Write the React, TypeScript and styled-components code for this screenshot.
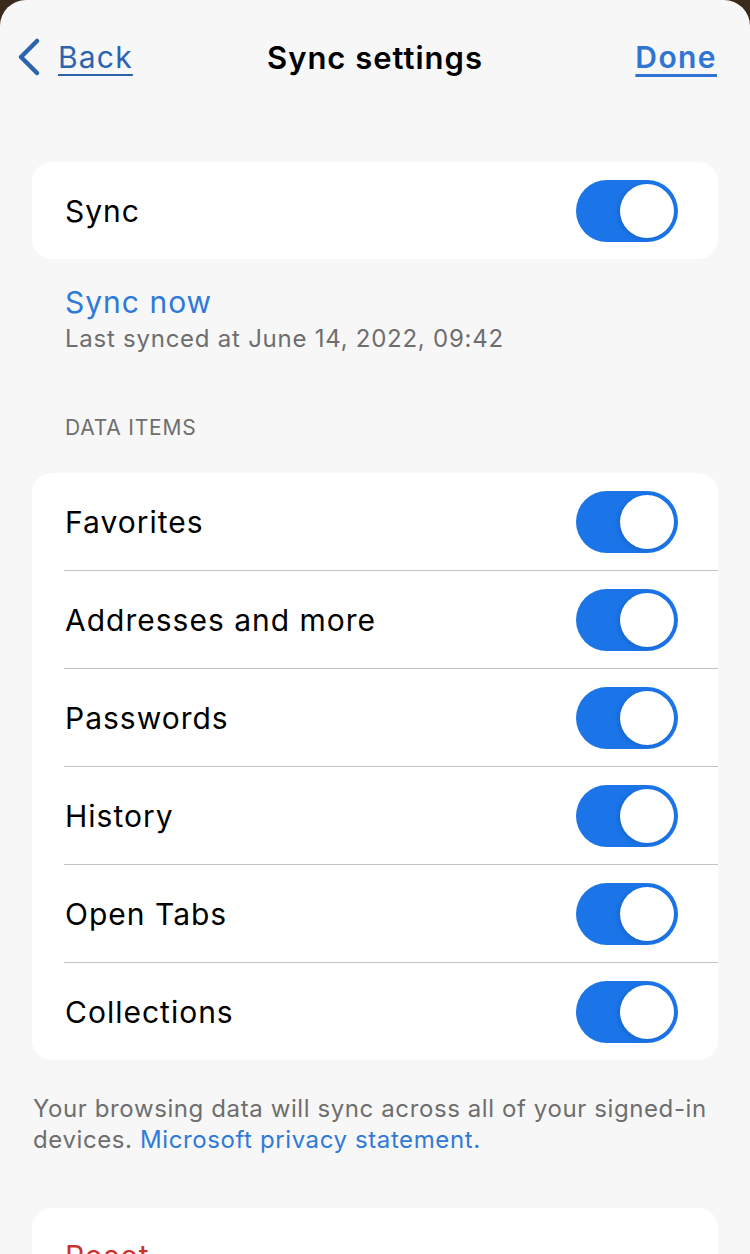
import React from 'react';
import styled, { createGlobalStyle } from 'styled-components';

const GlobalStyle = createGlobalStyle`
  html, body {
    margin: 0;
    padding: 0;
    background: #3a2a1c;
  }
  * {
    box-sizing: border-box;
  }
`;

const dataItems = ['Favorites', 'Addresses and more', 'Passwords', 'History', 'Open Tabs', 'Collections'];

const Toggle: React.FC<{ on?: boolean }> = ({ on = true }) => (
    <ToggleTrack $on={on}>
        <ToggleThumb />
    </ToggleTrack>
);

const App: React.FC = () => {
    return (
        <>
            <GlobalStyle />
            <Sheet>
                <Header>
                    <BackButton>
                        <svg width="30" height="40" viewBox="0 0 30 40">
                            <path d="M21 4 L5 20 L21 36" fill="none" stroke="#2c63ae" strokeWidth="4.5" strokeLinecap="round" strokeLinejoin="round" />
                        </svg>
                        <LinkText>Back</LinkText>
                    </BackButton>
                    <Title>Sync settings</Title>
                    <DoneButton>Done</DoneButton>
                </Header>

                <Content>
                    <Card>
                        <Row>
                            <RowLabel>Sync</RowLabel>
                            <Toggle />
                        </Row>
                    </Card>

                    <SyncNow>Sync now</SyncNow>
                    <LastSynced>Last synced at June 14, 2022, 09:42</LastSynced>

                    <SectionTitle>DATA ITEMS</SectionTitle>
                    <ItemsCard>
                        {dataItems.map((item, i) => (
                            <Row key={item} $divider={i < dataItems.length - 1}>
                                <RowLabel>{item}</RowLabel>
                                <Toggle />
                            </Row>
                        ))}
                    </ItemsCard>

                    <Footnote>
                        Your browsing data will sync across all of your <NoWrap>signed-in</NoWrap> devices.{' '}
                        <FootLink>Microsoft privacy statement.</FootLink>
                    </Footnote>

                    <ResetCard>
                        <ResetLabel>Reset</ResetLabel>
                    </ResetCard>
                </Content>
            </Sheet>
        </>
    );
};

export default App;

const Sheet = styled.div`
    width: 750px;
    height: 1254px;
    overflow: hidden;
    background: #f7f7f7;
    border-radius: 26px 26px 0 0;
    font-family: Inter, "Noto Sans", sans-serif;
    color: #000;
`;

const Header = styled.div`
    height: 114px;
    display: grid;
    grid-template-columns: 1fr auto 1fr;
    align-items: center;
    padding: 0 16px;
`;

const BackButton = styled.div`
    display: flex;
    align-items: center;
    gap: 12px;
    justify-self: start;
    cursor: pointer;
`;

const LinkText = styled.span`
    font-size: 30px;
    letter-spacing: 1.2px;
    color: #2c63ae;
    text-decoration: underline;
    text-decoration-thickness: 2px;
    text-underline-offset: 6px;
`;

const Title = styled.div`
    font-size: 31px;
    font-weight: 600;
    letter-spacing: 1px;
`;

const DoneButton = styled.div`
    justify-self: end;
    padding-right: 17px;
    font-size: 30px;
    font-weight: 600;
    letter-spacing: 1.4px;
    color: #2f75d3;
    text-decoration: underline;
    text-decoration-thickness: 3px;
    text-underline-offset: 6px;
    cursor: pointer;
`;

const Content = styled.div`
    padding: 48px 32px 0 32px;
    display: flex;
    flex-direction: column;
`;

const Card = styled.div`
    background: #fff;
    border-radius: 20px;
    padding-left: 32px;
`;

const ItemsCard = styled(Card)`
    margin-top: 32px;
`;

const Row = styled.div<{ $divider?: boolean }>`
    height: ${p => (p.$divider ? '98px' : '97px')};
    display: flex;
    align-items: center;
    justify-content: space-between;
    padding: 0 40px 0 1px;
    border-bottom: ${p => (p.$divider ? '1px solid #c1c1c3' : 'none')};
`;

const RowLabel = styled.span`
    font-size: 30px;
    letter-spacing: 1px;
    color: #000;
`;

const ToggleTrack = styled.div<{ $on: boolean }>`
    width: 102px;
    height: 62px;
    border-radius: 31px;
    background: ${p => (p.$on ? '#1b74e8' : '#e5e5ea')};
    display: flex;
    align-items: center;
    justify-content: ${p => (p.$on ? 'flex-end' : 'flex-start')};
    padding: 0 4px;
`;

const ToggleThumb = styled.div`
    width: 54px;
    height: 54px;
    border-radius: 50%;
    background: #fff;
    box-shadow: -2px 1px 4px rgba(0, 0, 0, 0.12);
`;

const SyncNow = styled.div`
    margin-top: 25px;
    padding-left: 33px;
    font-size: 30px;
    letter-spacing: 1px;
    line-height: 36px;
    color: #2f7ad9;
`;

const LastSynced = styled.div`
    margin-top: 4px;
    padding-left: 33px;
    font-size: 24px;
    letter-spacing: 0.75px;
    line-height: 30px;
    color: #6e6e6e;
`;

const SectionTitle = styled.div`
    margin-top: 61px;
    padding-left: 33px;
    font-size: 21px;
    line-height: 26px;
    color: #6e6e6e;
    letter-spacing: 0.8px;
`;

const Footnote = styled.div`
    margin-top: 33px;
    padding: 0 0 0 1px;
    font-size: 24px;
    letter-spacing: 0.6px;
    line-height: 31px;
    color: #6e6e6e;
`;

const NoWrap = styled.span`
    white-space: nowrap;
`;

const FootLink = styled.span`
    color: #2f7ad9;
`;

const ResetCard = styled(Card)`
    margin-top: 53px;
    height: 98px;
    padding-top: 30px;
    padding-left: 33px;
`;

const ResetLabel = styled.span`
    font-size: 30px;
    letter-spacing: 1px;
    color: #c9342f;
`;
